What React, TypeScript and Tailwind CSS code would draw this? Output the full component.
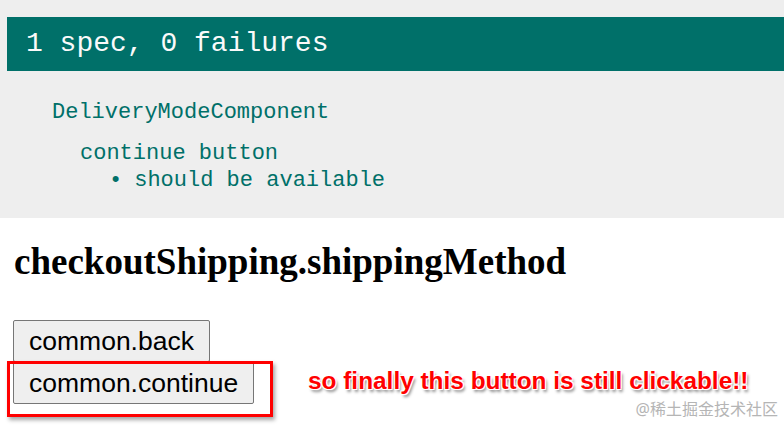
import React from "react";

const mono = "font-['Liberation_Mono','DejaVu_Sans_Mono',monospace]";

function Button({ label }: { label: string }) {
  return (
    <button className="h-[42px] px-[15px] bg-[#efefef] border border-[#767676] rounded-[2px] text-[26.5px] text-black font-['Liberation_Sans',Arial,sans-serif] leading-none">
      {label}
    </button>
  );
}

export default function App() {
  return (
    <div className="relative w-[784px] h-[425px] overflow-hidden bg-white">
      {/* jasmine reporter */}
      <div className={`h-[218px] bg-[#eeeeee] pt-[17px] pl-[7px] ${mono}`}>
        <div className="h-[54px] bg-[#007069] flex items-center pl-[19px] text-[28px] text-[#fafafa] leading-none">
          1 spec, 0 failures
        </div>
        <div className="pl-[45px] pt-[31px] text-[#007069] text-[22px] leading-none">
          <div>DeliveryModeComponent</div>
          <div className="pl-[28px] pt-[19px]">continue button</div>
          <div className="pl-[57px] pt-[5px] flex items-center gap-[12px]">
            <span className="text-[22px]">•</span>
            <span>should be available</span>
          </div>
        </div>
      </div>

      {/* rendered component */}
      <div className="pl-[13px] pt-[25px]">
        <h1 className="pl-px text-[37px] font-bold leading-none text-black font-['Liberation_Serif','Times_New_Roman',serif]">
          checkoutShipping.shippingMethod
        </h1>
        <div className="pt-[40px] flex flex-col items-start">
          <Button label="common.back" />
          <Button label="common.continue" />
        </div>
      </div>

      {/* annotation */}
      <div className="absolute left-[7px] top-[361px] w-[266px] h-[56px] border-[3px] border-[#ff0000] shadow-[2px_3px_4px_rgba(0,0,0,0.35)]" />
      <div className="absolute left-[308px] top-[369px] text-[24.4px] font-bold text-[#ff0000] leading-none font-['Liberation_Sans',Arial,sans-serif] [text-shadow:-1px_-1px_0_#fff,1px_-1px_0_#fff,-1px_1px_0_#fff,1px_1px_0_#fff,2px_3px_3px_rgba(0,0,0,0.45)]">
        so finally this button is still clickable!!
      </div>
      <div className="absolute right-[6px] top-[401px] text-[16px] text-[#b5b5b5] leading-none font-['Noto_Sans','Noto_Sans_CJK_SC',sans-serif]">
        @稀土掘金技术社区
      </div>
    </div>
  );
}
